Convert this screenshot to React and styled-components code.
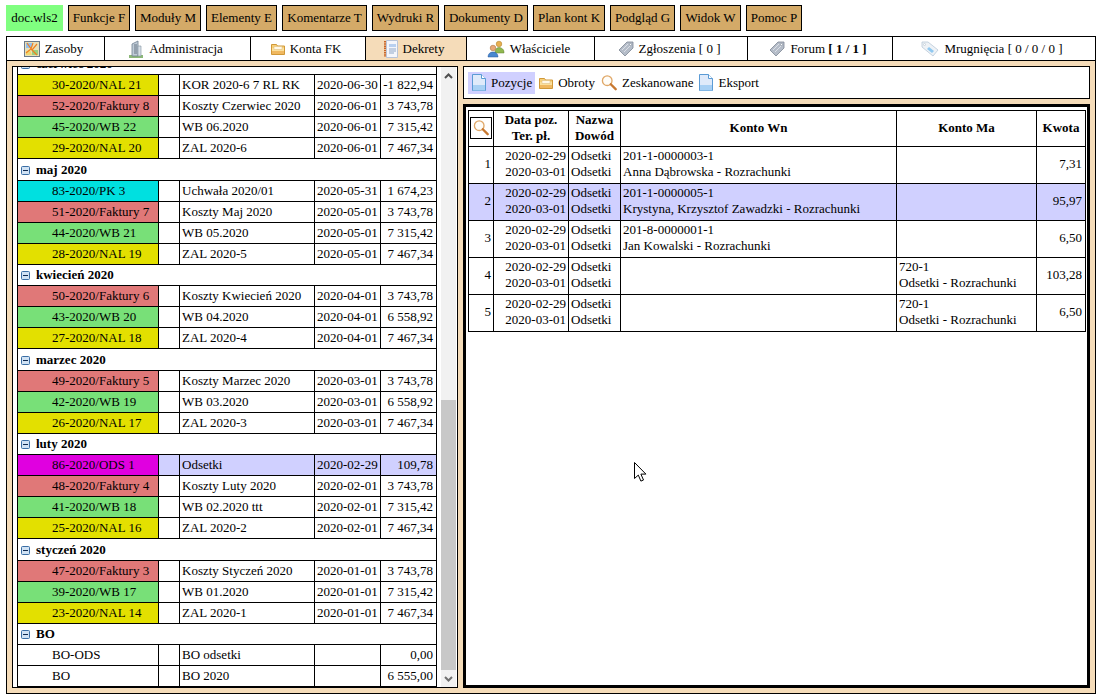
import React from 'react';
import styled, { createGlobalStyle } from 'styled-components';

const COLORS = {
  BEIGE: '#f5dcb9',
  BUTTON: '#d4aa68',
  GREEN_BTN: '#80ff80',
  LAVENDER: '#d0d0ff',
  YELLOW: '#e3e000',
  RED: '#e07878',
  GREEN: '#78e078',
  CYAN: '#00e0e0',
  MAGENTA: '#e000e0',
};

const GlobalStyle = createGlobalStyle`
  html, body {
    margin: 0;
    padding: 0;
    background: #fff;
  }
  body {
    font-family: "Liberation Serif", "Times New Roman", serif;
    font-size: 13px;
    color: #000;
  }
`;

const Page = styled.div`
  position: relative;
  width: 1100px;
  height: 700px;
  padding: 5px 4px 0 6px;
  box-sizing: border-box;
  overflow: hidden;
`;

const Menu = styled.div`
  display: flex;
  gap: 5px;
  height: 26px;
  margin-bottom: 5px;
`;

const MenuButton = styled.div`
  display: flex;
  align-items: center;
  justify-content: center;
  box-sizing: border-box;
  width: ${(p) => p.$w}px;
  background: ${(p) => (p.$doc ? COLORS.GREEN_BTN : COLORS.BUTTON)};
  border: 1px solid ${(p) => (p.$doc ? COLORS.GREEN_BTN : '#000')};
`;

const Tabs = styled.div`
  display: grid;
  grid-template-columns: 98px 146px 115px 101px 128px 153px 145px 1fr;
  height: 25px;
  box-sizing: border-box;
  border: 1px solid #000;
`;

const Tab = styled.div`
  display: flex;
  align-items: center;
  justify-content: center;
  gap: 5px;
  padding-right: 4px;
  background: ${(p) => (p.$active ? COLORS.BEIGE : '#fff')};
  border-right: ${(p) => (p.$last ? 'none' : '1px solid #000')};
  svg {
    flex: none;
  }
  b {
    font-weight: bold;
  }
`;

const Panel = styled.div`
  display: flex;
  gap: 5px;
  height: 633px;
  box-sizing: border-box;
  padding: 5px;
  background: ${COLORS.BEIGE};
  border: 1px solid #000;
  border-top: none;
`;

const ListPane = styled.div`
  display: flex;
  flex: none;
  width: 446px;
  box-sizing: border-box;
  background: #fff;
  border: 1px solid #000;
`;

const ListClip = styled.div`
  flex: 1;
  overflow: hidden;
  padding-left: 4px;
`;

const ListTable = styled.table`
  table-layout: fixed;
  width: 419px;
  margin-top: -14px;
  border-collapse: collapse;
  font-size: 13px;
`;

const ListRow = styled.tr`
  height: ${(p) => (p.$tall ? 22 : 21)}px;
`;

const ListCell = styled.td`
  box-sizing: border-box;
  padding: 0 ${(p) => (p.$right ? '3px' : '2px')} 0 ${(p) => (p.$indent ? '34px' : '2px')};
  border: 1px solid #000;
  white-space: nowrap;
  overflow: hidden;
  background: ${(p) => p.$bg || '#fff'};
  text-align: ${(p) => (p.$right ? 'right' : 'left')};
`;

const GroupCell = styled.td`
  padding: 0 0 0 3px;
  border: 1px solid #000;
  font-weight: bold;
  white-space: nowrap;
  svg {
    vertical-align: -1px;
    margin-right: 6px;
  }
`;

const ScrollBar = styled.div`
  display: flex;
  flex-direction: column;
  flex: none;
  width: 15px;
  margin-right: 1px;
  background: #f1f1f1;
`;

const ScrollArrow = styled.div`
  display: flex;
  align-items: center;
  justify-content: center;
  height: 17px;
`;

const ScrollGap = styled.div`
  flex: 1;
`;

const ScrollThumb = styled.div`
  height: 270px;
  background: #c8c8c8;
`;

const RightColumn = styled.div`
  display: flex;
  flex-direction: column;
  flex: 1;
  gap: 5px;
  min-width: 0;
`;

const Toolbar = styled.div`
  display: flex;
  align-items: center;
  height: 33px;
  box-sizing: border-box;
  padding-left: 4px;
  background: #fff;
  border: 1px solid #000;
`;

const ToolItem = styled.div`
  display: flex;
  align-items: center;
  gap: 5px;
  height: 22px;
  padding: 0 ${(p) => (p.$active ? 3 : 2)}px 0 4px;
  background: ${(p) => (p.$active ? COLORS.LAVENDER : 'transparent')};
`;

const DetailBox = styled.div`
  flex: 1;
  box-sizing: border-box;
  padding: 3px 2px 2px;
  background: #fff;
  border: 3px solid #000;
`;

const DetailTable = styled.table`
  table-layout: fixed;
  width: 617px;
  border-collapse: collapse;
  font-size: 13px;
  line-height: 16px;
`;

const Th = styled.th`
  box-sizing: border-box;
  height: 36px;
  padding: 0 0 2px;
  border: 1px solid #000;
  font-weight: bold;
  text-align: center;
`;

const DetailRow = styled.tr`
  height: 37px;
  background: ${(p) => (p.$selected ? COLORS.LAVENDER : '#fff')};
`;

const Td = styled.td`
  padding: 0 2px 2px;
  border: 1px solid #000;
  white-space: nowrap;
  text-align: ${(p) => (p.$right ? 'right' : 'left')};
`;

const AmountTd = styled(Td)`
  padding-right: 3px;
  text-align: right;
`;

const SearchBox = styled.div`
  display: flex;
  align-items: center;
  justify-content: center;
  width: 20px;
  height: 20px;
  margin: 0 0 0 1px;
  border: 1px solid #000;
`;

// mouse pointer caught in the screenshot
const Pointer = styled.svg`
  position: absolute;
  left: 634px;
  top: 462px;
`;

const IconMap = () => (
  <svg width="16" height="16" viewBox="0 0 16 16">
    <rect x="0.5" y="0.5" width="15" height="15" fill="#e8e0b8" stroke="#6a7a8a" />
    <path d="M2 2h6v5H2z" fill="#90c0f0" />
    <path d="M8 9l6 0v5H8z" fill="#98d080" />
    <path d="M2 10l4-1 2 5H2z" fill="#f0d870" />
    <path d="M3 2l5 7 5 5M9 2L7 8 2 12M13 3L8 9" fill="none" stroke="#f08020" strokeWidth="1.2" />
  </svg>
);

const IconBuilding = () => (
  <svg width="16" height="18" viewBox="0 0 16 18">
    <path d="M1 15h14v3H1z" fill="#8cb878" />
    <path d="M4 4l6-3v15H4z" fill="#c0ccd8" stroke="#708090" strokeWidth="0.8" />
    <path d="M10 6h3v10h-3z" fill="#d8e0e8" stroke="#8090a0" strokeWidth="0.6" />
    <path d="M6 5h3M6 7h3M6 9h3M6 11h3M6 13h3" stroke="#506070" strokeWidth="0.8" />
  </svg>
);

const IconFolder = () => (
  <svg width="14" height="14" viewBox="0 0 14 14">
    <path d="M0.5 2.5h5l1 1.5h7v8.5h-13z" fill="#f8d078" stroke="#d09838" />
    <path d="M1 6h12v6H1z" fill="#fbe09c" />
    <path d="M3 4.5h8v3H3z" fill="#fff8e8" stroke="#d8b878" strokeWidth="0.5" />
    <path d="M1 9h12v3H1z" fill="#f0b860" />
  </svg>
);

const IconNotes = () => (
  <svg width="14" height="18" viewBox="0 0 14 18">
    <path d="M2.5 0.5h11v17h-11z" fill="#f4f6fb" stroke="#b8c4d8" />
    <path d="M1 1v16" stroke="#c86428" strokeWidth="2" strokeDasharray="1.5 0.7" />
    <path d="M5 4h7v3H5z" fill="#b8d0f0" />
    <path d="M5 9h7M5 11h7M5 13h5" stroke="#90a8c8" />
  </svg>
);

const IconPeople = () => (
  <svg width="18" height="18" viewBox="0 0 18 18">
    <circle cx="12" cy="4" r="2.8" fill="#e8b050" stroke="#a87820" strokeWidth="0.5" />
    <path d="M8 12c0-3 2-4.500 4-4.500s5 1.500 5 4.500v1H8z" fill="#90b850" stroke="#608030" strokeWidth="0.5" />
    <circle cx="6" cy="8" r="2.800" fill="#e8a878" stroke="#a06830" strokeWidth="0.5" />
    <path d="M1 17c0-3 2-5 5-5s5 2 5 5z" fill="#4888d0" stroke="#28589c" strokeWidth="0.5" />
  </svg>
);

const IconTag = ({ fill = '#b4bcc8', line = '#7d8694', hole = '#fff' }) => (
  <svg width="16" height="16" viewBox="0 0 16 16">
    <path d="M9 1h6v6l-8 8-6-6z" fill={fill} stroke={line} strokeWidth="0.8" />
    <path d="M4 9l6-6M6 11l6-6" stroke="#e6e9ee" strokeWidth="0.8" />
    <circle cx="12.500" cy="3.500" r="1" fill={hole} stroke={line} strokeWidth="0.5" />
  </svg>
);

const IconTagBlue = () => (
  <svg width="18" height="16" viewBox="0 0 18 16">
    <path d="M1 1h6l10 8-5 6L1 6z" fill="#eef2f6" stroke="#b8c8d8" strokeWidth="0.8" />
    <path d="M8 6l5 4-2 2-5-4z" fill="#90c8f0" />
    <circle cx="3.500" cy="3.500" r="1" fill="#fff" stroke="#a8b8c8" strokeWidth="0.5" />
  </svg>
);

const IconDoc = () => (
  <svg width="14" height="17" viewBox="0 0 14 17">
    <path d="M0.500 0.500h9l4 4v12h-13z" fill="#dfeafa" stroke="#5b9bd5" />
    <path d="M9.500 0.500v4h4" fill="#fff" stroke="#5b9bd5" />
    <path d="M1 11h12v5.500H1z" fill="#a8d0f4" />
  </svg>
);

const IconSearch = () => (
  <svg width="16" height="17" viewBox="0 0 18 18">
    <circle cx="7" cy="7" r="5.400" fill="#fffdf8" stroke="#e0a868" strokeWidth="1.500" />
    <path d="M11 11l5.500 5.500" stroke="#c87830" strokeWidth="2.600" strokeLinecap="round" />
  </svg>
);

const IconMinus = () => (
  <svg width="9" height="9" viewBox="0 0 9 9">
    <rect x="0.500" y="0.500" width="8" height="8" rx="1" fill="#d0e2f4" stroke="#3a6ea5" />
    <path d="M2 4.500h5" stroke="#102a50" />
  </svg>
);

const UpChevron = () => (
  <svg width="9" height="6" viewBox="0 0 9 6">
    <path d="M1 5l3.500-3.500L8 5" fill="none" stroke="#505050" strokeWidth="2" />
  </svg>
);

const DownChevron = () => (
  <svg width="9" height="6" viewBox="0 0 9 6">
    <path d="M1 1l3.500 3.500L8 1" fill="none" stroke="#707070" strokeWidth="2" />
  </svg>
);

const MENU = [
  ['doc.wls2', 57, true],
  ['Funkcje F', 62],
  ['Moduły M', 66],
  ['Elementy E', 71],
  ['Komentarze T', 85],
  ['Wydruki R', 67],
  ['Dokumenty D', 84],
  ['Plan kont K', 72],
  ['Podgląd G', 65],
  ['Widok W', 61],
  ['Pomoc P', 56],
];

const { YELLOW, RED, GREEN, CYAN, MAGENTA } = COLORS;

const GROUPS = [
  {
    name: 'czerwiec 2020',
    rows: [
      ['30-2020/NAL 21', YELLOW, 'KOR 2020-6 7 RL RK', '2020-06-30', '-1 822,94'],
      ['52-2020/Faktury 8', RED, 'Koszty Czerwiec 2020', '2020-06-01', '3 743,78'],
      ['45-2020/WB 22', GREEN, 'WB 06.2020', '2020-06-01', '7 315,42'],
      ['29-2020/NAL 20', YELLOW, 'ZAL 2020-6', '2020-06-01', '7 467,34'],
    ],
  },
  {
    name: 'maj 2020',
    tall: true,
    rows: [
      ['83-2020/PK 3', CYAN, 'Uchwała 2020/01', '2020-05-31', '1 674,23'],
      ['51-2020/Faktury 7', RED, 'Koszty Maj 2020', '2020-05-01', '3 743,78'],
      ['44-2020/WB 21', GREEN, 'WB 05.2020', '2020-05-01', '7 315,42'],
      ['28-2020/NAL 19', YELLOW, 'ZAL 2020-5', '2020-05-01', '7 467,34'],
    ],
  },
  {
    name: 'kwiecień 2020',
    rows: [
      ['50-2020/Faktury 6', RED, 'Koszty Kwiecień 2020', '2020-04-01', '3 743,78'],
      ['43-2020/WB 20', GREEN, 'WB 04.2020', '2020-04-01', '6 558,92'],
      ['27-2020/NAL 18', YELLOW, 'ZAL 2020-4', '2020-04-01', '7 467,34'],
    ],
  },
  {
    name: 'marzec 2020',
    tall: true,
    rows: [
      ['49-2020/Faktury 5', RED, 'Koszty Marzec 2020', '2020-03-01', '3 743,78'],
      ['42-2020/WB 19', GREEN, 'WB 03.2020', '2020-03-01', '6 558,92'],
      ['26-2020/NAL 17', YELLOW, 'ZAL 2020-3', '2020-03-01', '7 467,34'],
    ],
  },
  {
    name: 'luty 2020',
    rows: [
      ['86-2020/ODS 1', MAGENTA, 'Odsetki', '2020-02-29', '109,78', true],
      ['48-2020/Faktury 4', RED, 'Koszty Luty 2020', '2020-02-01', '3 743,78'],
      ['41-2020/WB 18', GREEN, 'WB 02.2020 ttt', '2020-02-01', '7 315,42'],
      ['25-2020/NAL 16', YELLOW, 'ZAL 2020-2', '2020-02-01', '7 467,34'],
    ],
  },
  {
    name: 'styczeń 2020',
    tall: true,
    rows: [
      ['47-2020/Faktury 3', RED, 'Koszty Styczeń 2020', '2020-01-01', '3 743,78'],
      ['39-2020/WB 17', GREEN, 'WB 01.2020', '2020-01-01', '7 315,42'],
      ['23-2020/NAL 14', YELLOW, 'ZAL 2020-1', '2020-01-01', '7 467,34'],
    ],
  },
  {
    name: 'BO',
    rows: [
      ['BO-ODS', '', 'BO odsetki', '', '0,00'],
      ['BO', '', 'BO 2020', '', '6 555,00'],
    ],
  },
];

const POSITIONS = [
  { wn: ['201-1-0000003-1', 'Anna Dąbrowska - Rozrachunki'], kwota: '7,31' },
  { wn: ['201-1-0000005-1', 'Krystyna, Krzysztof Zawadzki - Rozrachunki'], kwota: '95,97', selected: true },
  { wn: ['201-8-0000001-1', 'Jan Kowalski - Rozrachunki'], kwota: '6,50' },
  { ma: ['720-1', 'Odsetki - Rozrachunki'], kwota: '103,28' },
  { ma: ['720-1', 'Odsetki - Rozrachunki'], kwota: '6,50' },
];

const TwoLines = ({ lines }) =>
  lines ? (
    <>
      {lines[0]}
      <br />
      {lines[1]}
    </>
  ) : null;

const App = () => (
  <Page>
    <GlobalStyle />
    <Menu>
      {MENU.map(([label, w, doc]) => (
        <MenuButton key={label} $w={w} $doc={doc}>
          {label}
        </MenuButton>
      ))}
    </Menu>

    <Tabs>
      <Tab><IconMap />Zasoby</Tab>
      <Tab><IconBuilding />Administracja</Tab>
      <Tab><IconFolder />Konta FK</Tab>
      <Tab $active><IconNotes />Dekrety</Tab>
      <Tab><IconPeople />Właściciele</Tab>
      <Tab><IconTag /><span>Zgłoszenia [ 0 ]</span></Tab>
      <Tab><IconTag /><span>Forum <b>[ 1 / 1 ]</b></span></Tab>
      <Tab $last><IconTagBlue /><span>Mrugnięcia [ 0 / 0 / 0 ]</span></Tab>
    </Tabs>

    <Panel>
      <ListPane>
        <ListClip>
          <ListTable>
            <colgroup>
              <col style={{ width: 141 }} />
              <col style={{ width: 21 }} />
              <col style={{ width: 135 }} />
              <col style={{ width: 66 }} />
              <col style={{ width: 56 }} />
            </colgroup>
            <tbody>
              {GROUPS.map((group) => (
                <React.Fragment key={group.name}>
                  <ListRow $tall={group.tall}>
                    <GroupCell colSpan={5}>
                      <IconMinus />
                      {group.name}
                    </GroupCell>
                  </ListRow>
                  {group.rows.map(([num, bg, title, date, amount, selected]) => (
                    <ListRow key={num}>
                      <ListCell $indent $bg={bg}>{num}</ListCell>
                      <ListCell $bg={selected ? COLORS.LAVENDER : ''} />
                      <ListCell $bg={selected ? COLORS.LAVENDER : ''}>{title}</ListCell>
                      <ListCell $bg={selected ? COLORS.LAVENDER : ''}>{date}</ListCell>
                      <ListCell $right $bg={selected ? COLORS.LAVENDER : ''}>{amount}</ListCell>
                    </ListRow>
                  ))}
                </React.Fragment>
              ))}
            </tbody>
          </ListTable>
        </ListClip>
        <ScrollBar>
          <ScrollArrow><UpChevron /></ScrollArrow>
          <ScrollGap />
          <ScrollThumb />
          <ScrollArrow><DownChevron /></ScrollArrow>
        </ScrollBar>
      </ListPane>

      <RightColumn>
        <Toolbar>
          <ToolItem $active><IconDoc />Pozycje</ToolItem>
          <ToolItem><IconFolder />Obroty</ToolItem>
          <ToolItem><IconSearch />Zeskanowane</ToolItem>
          <ToolItem><IconDoc />Eksport</ToolItem>
        </Toolbar>
        <DetailBox>
          <DetailTable>
            <colgroup>
              <col style={{ width: 25 }} />
              <col style={{ width: 75 }} />
              <col style={{ width: 52 }} />
              <col style={{ width: 276 }} />
              <col style={{ width: 140 }} />
              <col style={{ width: 49 }} />
            </colgroup>
            <thead>
              <tr>
                <Th><SearchBox><IconSearch /></SearchBox></Th>
                <Th>Data poz.<br />Ter. pł.</Th>
                <Th>Nazwa<br />Dowód</Th>
                <Th>Konto Wn</Th>
                <Th>Konto Ma</Th>
                <Th>Kwota</Th>
              </tr>
            </thead>
            <tbody>
              {POSITIONS.map((row, i) => (
                <DetailRow key={i} $selected={row.selected}>
                  <Td $right>{i + 1}</Td>
                  <Td $right>2020-02-29<br />2020-03-01</Td>
                  <Td>Odsetki<br />Odsetki</Td>
                  <Td><TwoLines lines={row.wn} /></Td>
                  <Td><TwoLines lines={row.ma} /></Td>
                  <AmountTd>{row.kwota}</AmountTd>
                </DetailRow>
              ))}
            </tbody>
          </DetailTable>
        </DetailBox>
      </RightColumn>
    </Panel>

    <Pointer width="13" height="21" viewBox="0 0 13 21">
      <path d="M0.500 0.500v16l3.800-3.400 2.600 6 2.600-1.100-2.600-5.900h5z" fill="#fff" stroke="#000" />
    </Pointer>
  </Page>
);

export default App;
